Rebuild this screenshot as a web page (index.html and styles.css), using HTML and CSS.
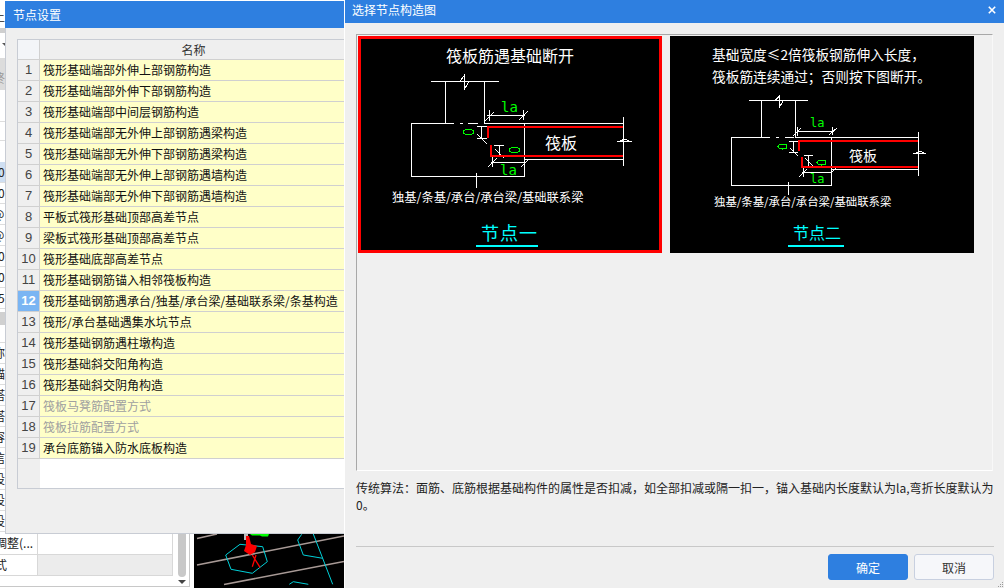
FILE: index.html
```html
<!DOCTYPE html>
<html lang="zh">
<head>
<meta charset="utf-8">
<title>节点设置</title>
<link rel="stylesheet" href="styles.css">
</head>
<body>
<div class="desktop">
  <div class="backstrip">
    <div class="bs-head"><span class="clip">土</span></div>
    <div class="bs-combo"><i class="bs-caret"></i></div>
    <div class="bs-tools"><span class="clip bs-faint">终</span></div>
    <div class="bs-blank"></div>
    <div class="bs-row bs-hi"><span class="clip digit">0</span></div>
    <div class="bs-row"><span class="clip digit">0</span></div>
    <div class="bs-row"><span class="clip">@</span></div>
    <div class="bs-row"><span class="clip">@</span></div>
    <div class="bs-row"><span class="clip digit">0</span></div>
    <div class="bs-row"><span class="clip digit">0</span></div>
    <div class="bs-row"><span class="clip digit">5</span></div>
    <div class="bs-band"></div>
    <div class="bs-row"><span class="clip">称</span></div>
    <div class="bs-row"><span class="clip">锚</span></div>
    <div class="bs-row"><span class="clip">搭</span></div>
    <div class="bs-row"><span class="clip">搭</span></div>
    <div class="bs-row"><span class="clip">容</span></div>
    <div class="bs-row"><span class="clip">信</span></div>
    <div class="bs-row"><span class="clip">设</span></div>
    <div class="bs-row"><span class="clip">设</span></div>
    <div class="bs-row"><span class="clip">设</span></div>
  </div>
  <div class="backpanel">
    <div class="backprops">
      <div class="bp-row"><span class="bp-a"><span class="clip">调整(...</span></span><span class="bp-b"></span></div>
      <div class="bp-row"><span class="bp-a"><span class="clip">式</span></span><span class="bp-b grey"></span></div>
    </div>
    <div class="backscroll"><i class="thumb"></i><i class="arrow"></i></div>
  </div>
  <svg class="cad" viewBox="0 0 150 55" aria-hidden="true">
    <rect width="150" height="55" fill="#000"/>
    <path d="M3 5.500 L23 1M3 32 L150 3M30 51.500 L150 28.500" stroke="#a89a96" stroke-width="1.600" fill="none"/>
    <g stroke="#00d0d8" fill="none" stroke-width="1">
      <path d="M31.700 22 L46 11.300 L68.700 13.700 L73.300 28.700 L58.300 40.300 L37 36.300 Z"/>
      <path d="M107.700 1.300 L103.700 7 L109.300 22 L128.700 25.300M119.300 1 L138.700 51.300M95.300 51.300 L99.300 48.700 L114.300 51.300"/>
    </g>
    <path d="M50 1 H54 V7 H50Z" fill="#bbb"/>
    <path d="M56 1 H75 L74 3.500 H68 L66 2.500 H58Z" fill="#0f0"/>
    <path d="M52 3 L55 3 L57 11 L63 13 L61 19 L56 22 L50 18 L52 12 Z" fill="#f00"/>
    <path d="M58.300 22 L66 34.300M62 22 L58.300 33.700" stroke="#f00" stroke-width="1.300"/>
  </svg>

  <section class="win win-left">
    <header class="titlebar">节点设置</header>
    <div class="grid">
      <div class="ghead"><span class="num"></span><span class="cell">名称</span></div>
      <div class="grow"><span class="num">1</span><span class="cell">筏形基础端部外伸上部钢筋构造</span></div>
      <div class="grow"><span class="num">2</span><span class="cell">筏形基础端部外伸下部钢筋构造</span></div>
      <div class="grow"><span class="num">3</span><span class="cell">筏形基础端部中间层钢筋构造</span></div>
      <div class="grow"><span class="num">4</span><span class="cell">筏形基础端部无外伸上部钢筋遇梁构造</span></div>
      <div class="grow"><span class="num">5</span><span class="cell">筏形基础端部无外伸下部钢筋遇梁构造</span></div>
      <div class="grow"><span class="num">6</span><span class="cell">筏形基础端部无外伸上部钢筋遇墙构造</span></div>
      <div class="grow"><span class="num">7</span><span class="cell">筏形基础端部无外伸下部钢筋遇墙构造</span></div>
      <div class="grow"><span class="num">8</span><span class="cell">平板式筏形基础顶部高差节点</span></div>
      <div class="grow"><span class="num">9</span><span class="cell">梁板式筏形基础顶部高差节点</span></div>
      <div class="grow"><span class="num">10</span><span class="cell">筏形基础底部高差节点</span></div>
      <div class="grow"><span class="num">11</span><span class="cell">筏形基础钢筋锚入相邻筏板构造</span></div>
      <div class="grow sel"><span class="num">12</span><span class="cell">筏形基础钢筋遇承台/独基/承台梁/基础联系梁/条基构造</span></div>
      <div class="grow"><span class="num">13</span><span class="cell">筏形/承台基础遇集水坑节点</span></div>
      <div class="grow"><span class="num">14</span><span class="cell">筏形基础钢筋遇柱墩构造</span></div>
      <div class="grow"><span class="num">15</span><span class="cell">筏形基础斜交阳角构造</span></div>
      <div class="grow"><span class="num">16</span><span class="cell">筏形基础斜交阴角构造</span></div>
      <div class="grow off"><span class="num">17</span><span class="cell">筏板马凳筋配置方式</span></div>
      <div class="grow off"><span class="num">18</span><span class="cell">筏板拉筋配置方式</span></div>
      <div class="grow"><span class="num">19</span><span class="cell">承台底筋锚入防水底板构造</span></div>
      <div class="gfill"><span class="num"></span><span class="cell"></span></div>
    </div>
  </section>

  <section class="win win-right">
    <header class="titlebar tb-right"><span class="tb-text">选择节点构造图</span>
      <svg class="close" viewBox="0 0 10 10" aria-hidden="true"><path d="M1 1 L9 9M9 1 L1 9" stroke="#fff" stroke-width="2"/></svg>
    </header>
    <div class="body">
      <div class="frame">
        <figure class="node picked">
          <svg class="draw" viewBox="0 0 304 217" aria-hidden="true">
            <g stroke="#fff" fill="none" stroke-width="1">
              <path d="M73 45.500 H141 M87.500 46 V87 M126.500 46 V87"/>
              <path d="M102 45.500 L106.500 39 V53 L111 45.500"/>
              <path d="M96 87.500 H53.500 V140.500 H166.500 V87.500 M102 87.500 H105 M110 87.500 H120 M126 87.500 H265"/>
              <path d="M265.500 81 V130"/>
              <path d="M259 105.500 H274 M262 105 L267 103 L271 105"/>
              <path d="M167 123.500 H265"/>
              <path d="M129 79.500 H167 M131.500 74 V85 M127 85 L136 76 M165.500 74 V84 M161 84 L170 75"/>
              <path d="M119 90.500 H129 M119 102.500 H129 M123.500 91 V102 M119 98 L129 108"/>
              <path d="M136 109.500 H146 M136 119.500 H146 M141.500 110 V119 M137 113 L146 122"/>
              <path d="M133 126.500 H167 M134.500 121 V131 M130 131 L139 122 M163 131 L171 123"/>
              <path d="M118.500 137 V152"/>
            </g>
            <path d="M130 102 V91 H265 M133 109 V120 H265" stroke="#f00" stroke-width="2" fill="none"/>
            <g stroke="#0f0" fill="none"><ellipse cx="110.500" cy="96" rx="5.500" ry="2.500"/><ellipse cx="156.500" cy="114" rx="5.500" ry="2.500"/></g>
          </svg>
          <span class="t t1-title">筏板筋遇基础断开</span>
          <span class="t la la1">la</span><span class="t la la2">la</span>
          <span class="t t1-board">筏板</span>
          <span class="t t1-cap">独基/条基/承台/承台梁/基础联系梁</span>
          <span class="t t1-name">节点一</span>
        </figure>
        <figure class="node">
          <svg class="draw" viewBox="0 0 304 217" aria-hidden="true">
            <g stroke="#fff" fill="none" stroke-width="1">
              <path d="M79 64.500 H138 M91.500 65 V101 M125.500 65 V101"/>
              <path d="M105 64.500 L109.500 60 V71 L113.500 64.500"/>
              <path d="M100 101.500 H61.500 V149.500 H161.500 V101.500 M106 101.500 H109 M115 101.500 H124 M125 101.500 H248"/>
              <path d="M248.500 96 V140"/>
              <path d="M243 117.500 H256 M246 117 L250 115 L254 117"/>
              <path d="M162 133.500 H248"/>
              <path d="M127 95.500 H163 M127.500 91 V100 M123 100 L131 92 M162.500 91 V99 M159 99 L167 92"/>
              <path d="M119 105.500 H128 M119 116.500 H128 M123.500 106 V116 M120 112 L128 120"/>
              <path d="M134 119.500 H143 M134 131.500 H143 M138.500 120 V131 M135 122 L143 130"/>
              <path d="M132 136.500 H162 M133.500 132 V141 M129 141 L137 133 M162 136 L168 130"/>
              <path d="M118.500 146 V159"/>
            </g>
            <path d="M129 115 V105 H248 M132 121 V131 H248" stroke="#f00" stroke-width="2" fill="none"/>
            <g stroke="#0f0" fill="none"><ellipse cx="112.500" cy="110.500" rx="4.500" ry="2.500"/><ellipse cx="151.500" cy="126.500" rx="4.500" ry="2.500"/></g>
          </svg>
          <span class="t t2-l1">基础宽度≤2倍筏板钢筋伸入长度，</span>
          <span class="t t2-l2">筏板筋连续通过；否则按下图断开。</span>
          <span class="t la la3">la</span><span class="t la la4">la</span>
          <span class="t t2-board">筏板</span>
          <span class="t t2-cap">独基/条基/承台/承台梁/基础联系梁</span>
          <span class="t t2-name">节点二</span>
        </figure>
      </div>
      <p class="desc">传统算法：面筋、底筋根据基础构件的属性是否扣减，如全部扣减或隔一扣一，锚入基础内长度默认为la,弯折长度默认为0。</p>
      <footer class="foot">
        <button class="btn primary">确定</button>
        <button class="btn">取消</button>
      </footer>
    </div>
    <svg class="grip" viewBox="0 0 6 6" aria-hidden="true"><path d="M4 0h1v1H4zM2 2h1v1H2zM4 2h1v1H4zM0 4h1v1H0zM2 4h1v1H2zM4 4h1v1H4z" fill="#9a9a9a"/></svg>
  </section>
</div>
</body>
</html>
```
FILE: styles.css
```css
* { box-sizing: border-box; }
html, body { margin: 0; padding: 0; }
body {
  width: 1004px; height: 588px; overflow: hidden; background: #fff;
  font-family: "Noto Sans CJK SC", "Liberation Sans", sans-serif;
  font-size: 12px; color: #222;
}
.desktop { position: relative; width: 1004px; height: 588px; overflow: hidden; background: #fff; }

/* windows behind the dialogs */
.backstrip { position: absolute; left: 0; top: 0; width: 5px; height: 533px; overflow: hidden; }
.clip { display: block; margin-left: -7px; white-space: nowrap; color: #222; font-size: 12px; line-height: 20px; }
.clip.digit { margin-left: -2px; }
.bs-head { height: 33px; padding-top: 7px; border-bottom: 5px solid #cfcfcf; }
.bs-combo { height: 25px; padding: 10px 0 0 2px; }
.bs-caret { display: block; width: 0; border-left: 3px solid transparent; border-right: 3px solid transparent; border-top: 3px solid #555; }
.bs-tools { height: 32px; background: #dcdcdc; padding-top: 10px; }
.bs-faint { color: #999; }
.bs-blank { height: 72px; background: linear-gradient(#fff 31px, #ddd 31px, #ddd 32px, #fff 32px, #fff 50px, #ddd 50px, #ddd 51px, #fff 51px); }
.bs-row { height: 21px; border-bottom: 1px solid #ddd; }
.bs-hi { background: #cfdff2; }
.bs-band { height: 34px; background: linear-gradient(#fff 3px, #d0d0d0 3px, #d0d0d0 16px, #fff 16px); border-bottom: 1px solid #ddd; }

.backpanel { position: absolute; left: 0; top: 533px; width: 190px; height: 54px; border-right: 1px solid #c8c8c8; border-bottom: 1px solid #c8c8c8; background: #fff; }
.backprops { width: 173px; border-bottom: 1px solid #d8d8d8; }
.bp-row { display: flex; height: 20.500px; }
.bp-row + .bp-row { border-top: 1px solid #d8d8d8; height: 21px; }
.bp-a { width: 38px; border-right: 1px solid #d8d8d8; overflow: hidden; }
.bp-a .clip { margin-left: -5px; }
.bp-b { flex: 1; border-right: 1px solid #d8d8d8; }
.bp-b.grey { background: #ececec; }
.backscroll { position: absolute; left: 178px; top: 0; width: 8px; height: 52px; }
.thumb { display: block; width: 8px; height: 44px; background: #c8c8c8; border-radius: 0 0 4px 4px; }
.arrow { display: block; margin-top: 3px; width: 0; border-left: 4px solid transparent; border-right: 4px solid transparent; border-top: 4px solid #444; }
.cad { position: absolute; left: 194px; top: 533px; width: 150px; height: 55px; }

/* dialogs */
.win { position: absolute; background: #efefef; }
.win-left { left: 5px; top: 1px; width: 339px; height: 533px; border-left: 1px solid #c8ccd4; border-bottom: 1px solid #c8ccd4; }
.win-right { left: 345px; top: 0; width: 659px; height: 588px; display: flex; flex-direction: column; }
.titlebar { height: 27px; margin-left: -1px; background: #2e7fe0; color: #fff; font-size: 12px; line-height: 27px; padding-left: 8px; }
.tb-right { flex: none; height: 23px; margin-left: 0; display: flex; justify-content: space-between; align-items: center; padding: 0 8px 3px 7px; line-height: 20px; }
.close { width: 8px; height: 8px; }
.grip { position: absolute; right: 0; bottom: 0; width: 6px; height: 6px; }

/* node table */
.grid { margin: 11px 0 0 11px; height: 450px; border: 1px solid #c8ccd4; border-right: 0; display: flex; flex-direction: column; }
.ghead, .grow, .gfill { display: flex; flex: none; }
.ghead { height: 20px; border-bottom: 1px solid #d0d0d0; background: #efefef; }
.grow { height: 21px; border-bottom: 1px solid #d0d0d0; }
.gfill { flex: 1; }
.num { width: 22px; flex: none; text-align: center; background: #efefef; border-right: 1px solid #d0d0d0; color: #444; font-size: 13px; line-height: 20px; font-family: "Liberation Sans", sans-serif; }
.ghead .num { background: #f3f5f8; }
.gfill .num { border-right: 0; }
.cell { flex: 1; padding-left: 3px; background: #ffffc8; line-height: 20px; color: #111; white-space: nowrap; overflow: hidden; }
.ghead .cell { background: #efefef; text-align: center; color: #333; }
.gfill .cell { background: #fff; }
.sel .num { background: #7ab5f3; color: #fff; font-weight: bold; }
.off .cell { color: #a0a0a0; }

/* node picker */
.body { flex: 1; display: flex; flex-direction: column; padding: 11px 11px 8px; min-height: 0; }
.frame { height: 437px; flex: none; display: flex; gap: 8px; align-items: flex-start; padding: 1px 0 0 1px; border-top: 1px solid #a8a8a8; border-left: 1px solid #a8a8a8; border-bottom: 1px solid #fff; border-right: 1px solid #f8f8f8; background: #f0f0f0; }
.node { position: relative; flex: none; width: 304px; height: 217px; margin: 0; background: #000; }
.node.picked { box-shadow: inset 0 0 0 3px #f00; }
.draw { position: absolute; inset: 0; width: 304px; height: 217px; shape-rendering: crispEdges; }
.t { position: absolute; color: #fff; white-space: nowrap; font-family: "Noto Sans CJK SC", sans-serif; }
.la { color: #0f0; font-family: "DejaVu Sans Mono", monospace; font-size: 14px; line-height: 16px; }
.la1 { left: 143px; top: 63px; } .la2 { left: 142px; top: 126px; }
.la3 { left: 140px; top: 79px; font-size: 12px; } .la4 { left: 140px; top: 135px; font-size: 12px; }
.t1-title { left: 88px; top: 8px; font-size: 16px; line-height: 22px; }
.t1-board { left: 187px; top: 95px; font-size: 16px; line-height: 22px; }
.t1-cap { left: 34px; top: 151px; font-size: 12.300px; line-height: 20px; }
.t1-name { left: 118px; top: 183px; font-size: 18px; line-height: 26px; color: #0ff; border-bottom: 2px solid #0ff; letter-spacing: 1px; padding-left: 5px; }
.t2-l1 { left: 42px; top: 8px; font-size: 13.700px; line-height: 20px; }
.t2-l2 { left: 42px; top: 30px; font-size: 13.700px; line-height: 20px; }
.t2-board { left: 179px; top: 109px; font-size: 14px; line-height: 20px; }
.t2-cap { left: 44px; top: 157px; font-size: 11.400px; line-height: 16px; }
.t2-name { left: 118px; top: 184px; font-size: 16px; line-height: 25px; color: #0ff; border-bottom: 2px solid #0ff; padding: 0 3px 0 5px; }

.desc { margin: 8px -1px 0 0; height: 68px; line-height: 17px; font-size: 12px; color: #222; border-bottom: 1px solid #c8c8c8; }
.foot { display: flex; justify-content: flex-end; gap: 6px; margin: 7px -1px 0 0; }
.btn { width: 80px; height: 26px; padding: 0; border: 1px solid #c8d0e0; border-radius: 3px; background: #f6f7fa; color: #333; font: 12px "Noto Sans CJK SC", sans-serif; }
.btn.primary { background: #2e7fe0; border-color: #2e7fe0; color: #fff; }
```
